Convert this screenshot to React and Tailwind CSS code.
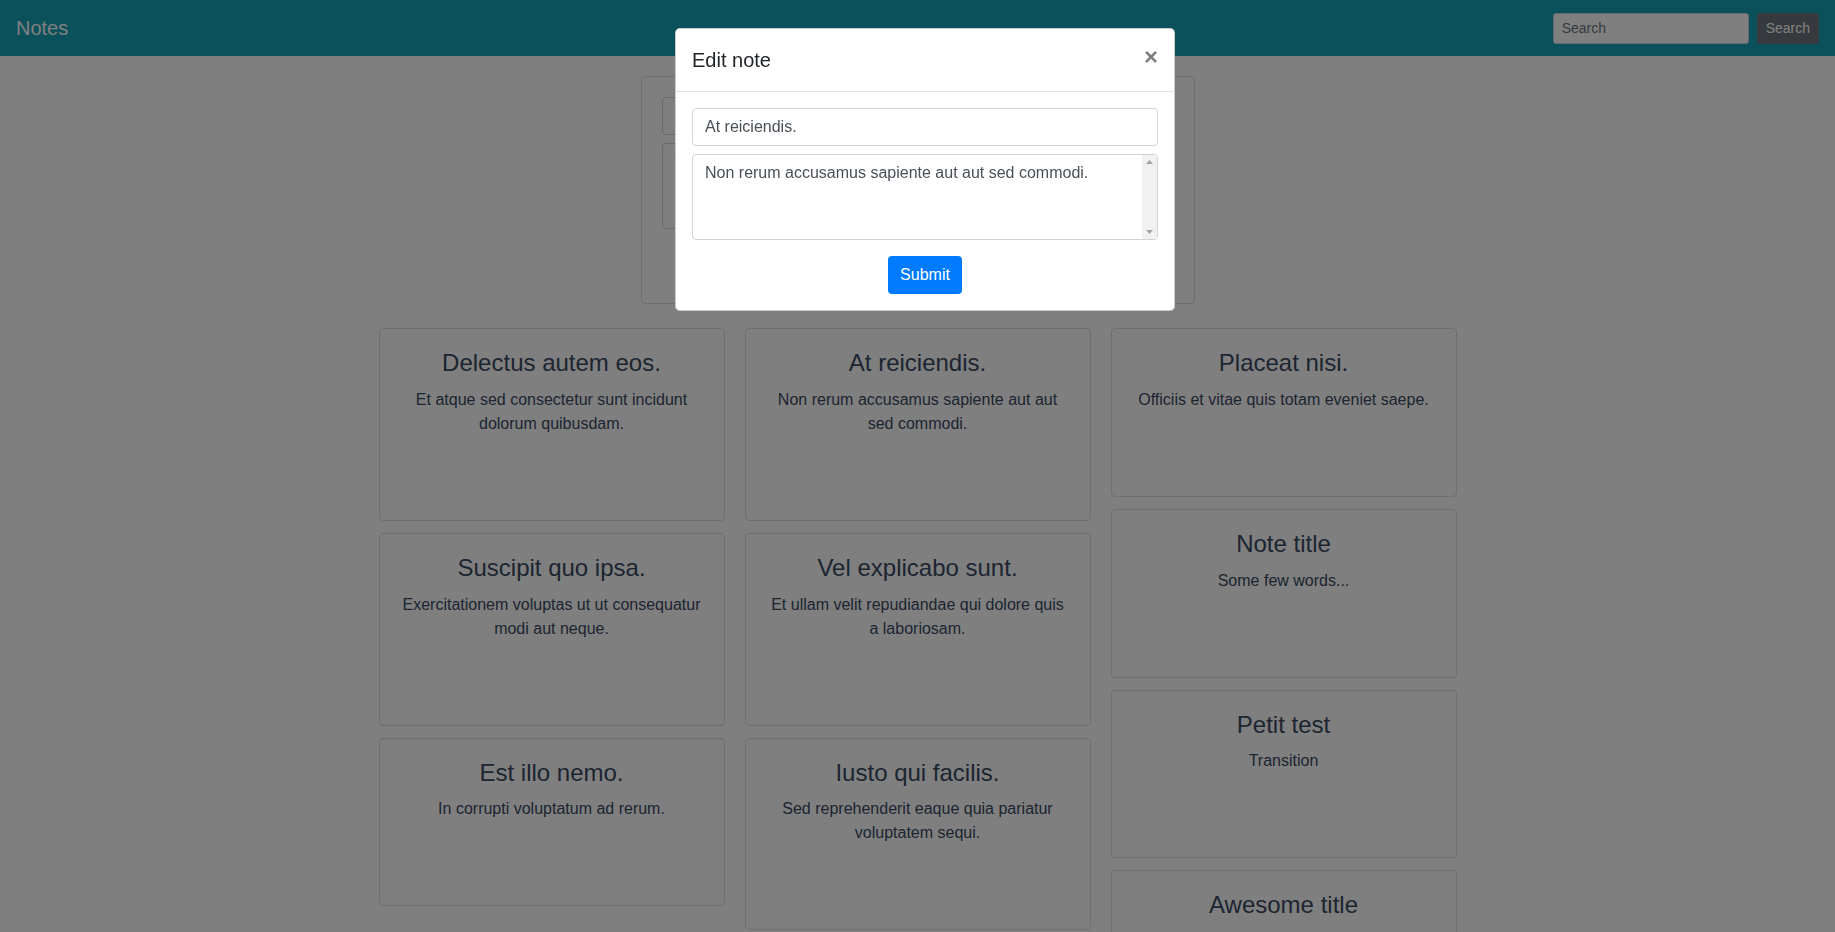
import React from 'react';

const columns = [
  [
    { title: 'Delectus autem eos.', text: 'Et atque sed consectetur sunt incidunt dolorum quibusdam.' },
    { title: 'Suscipit quo ipsa.', text: 'Exercitationem voluptas ut ut consequatur modi aut neque.' },
    { title: 'Est illo nemo.', text: 'In corrupti voluptatum ad rerum.' },
  ],
  [
    { title: 'At reiciendis.', text: 'Non rerum accusamus sapiente aut aut sed commodi.' },
    { title: 'Vel explicabo sunt.', text: 'Et ullam velit repudiandae qui dolore quis a laboriosam.' },
    { title: 'Iusto qui facilis.', text: 'Sed reprehenderit eaque quia pariatur voluptatem sequi.' },
  ],
  [
    { title: 'Placeat nisi.', text: 'Officiis et vitae quis totam eveniet saepe.' },
    { title: 'Note title', text: 'Some few words...' },
    { title: 'Petit test', text: 'Transition' },
    { title: 'Awesome title', text: 'Lorem ipsum dolor sit amet.' },
  ],
];

const NoteCard = ({ title, text }) => (
  <div className="border border-[#dfdfdf] rounded-[4px] bg-white p-5 text-center text-[#3a4a62]">
    <h4 className="text-[24px] leading-[1.2] font-normal mb-[10px]">{title}</h4>
    <p className="text-[16px] leading-6">{text}</p>
    <div className="h-[64px]" />
  </div>
);

const App = () => {
  return (
    <div className="h-screen overflow-hidden bg-white font-['Liberation_Sans',Arial,sans-serif] text-[#212529] relative">
      {/* Navbar */}
      <nav className="h-14 bg-[#17a2b8] flex items-center justify-between px-4">
        <span className="text-white text-[20px] leading-[30px]">Notes</span>
        <div className="flex items-center gap-2">
          <input
            className="w-[196px] h-[31px] px-2 text-[14px] bg-white border border-[#ced4da] rounded-[3px] placeholder:text-[#6c757d] outline-none"
            placeholder="Search"
          />
          <button className="h-[31px] px-2 text-[14px] text-white bg-[#6c757d] border border-[#6c757d] rounded-[3px]">
            Search
          </button>
        </div>
      </nav>

      {/* New note form */}
      <div className="w-[554px] mx-auto mt-5 border border-[#dfdfdf] rounded-[4px] p-5">
        <input
          className="w-full h-[38px] px-3 text-[16px] border border-[#ced4da] rounded-[4px] placeholder:text-[#6c757d]"
          placeholder="Title"
        />
        <textarea
          rows={3}
          className="block w-full h-[86px] mt-2 px-3 py-1.5 text-[16px] leading-6 border border-[#ced4da] rounded-[4px] resize-none placeholder:text-[#6c757d]"
          placeholder="Take a note..."
        />
        <div className="flex justify-center mt-4">
          <button className="h-[38px] px-3 text-[16px] text-white bg-[#007bff] rounded-[4px]">Submit</button>
        </div>
      </div>

      {/* Notes */}
      <div className="w-[1078px] mx-auto mt-6 grid grid-cols-3 gap-x-5 items-start">
        {columns.map((col, i) => (
          <div key={i} className="flex flex-col gap-3">
            {col.map((n) => (
              <NoteCard key={n.title} {...n} />
            ))}
          </div>
        ))}
      </div>

      {/* Backdrop */}
      <div className="fixed inset-0 bg-[rgba(0,0,0,0.5)]" />

      {/* Modal */}
      <div className="fixed inset-0 pl-[15px]">
        <div className="w-[500px] mx-auto mt-[28px] bg-white border border-[rgba(0,0,0,0.2)] rounded-[5px]">
          <div className="flex items-start p-4 border-b border-[#dee2e6]">
            <h5 className="text-[20px] leading-[30px] text-[#212529]">Edit note</h5>
            <button className="ml-auto -m-4 p-4 text-[24px] leading-none font-bold text-black opacity-50">×</button>
          </div>
          <div className="p-4">
            <input
              className="w-full h-[38px] px-3 text-[16px] text-[#495057] border border-[#ced4da] rounded-[4px] outline-none"
              defaultValue="At reiciendis."
            />
            <div className="relative mt-2">
              <textarea
                rows={3}
                className="block w-full h-[86px] px-3 py-1.5 text-[16px] leading-6 text-[#495057] border border-[#ced4da] rounded-[4px] resize-none overflow-hidden outline-none"
                defaultValue="Non rerum accusamus sapiente aut aut sed commodi."
              />
              {/* scrollbar */}
              <div className="absolute top-px bottom-px right-px w-[15px] bg-[#f1f1f1] rounded-r-[3px] flex flex-col items-center justify-between py-[5px]">
                <svg width="7" height="4" viewBox="0 0 7 4">
                  <path d="M0 4 L3.5 0 L7 4 Z" fill="#a3a3a3" />
                </svg>
                <svg width="7" height="4" viewBox="0 0 7 4">
                  <path d="M0 0 L3.5 4 L7 0 Z" fill="#a3a3a3" />
                </svg>
              </div>
            </div>
            <div className="flex justify-center mt-4">
              <button className="h-[38px] px-3 text-[16px] text-white bg-[#007bff] rounded-[4px]">Submit</button>
            </div>
          </div>
        </div>
      </div>
    </div>
  );
};

export default App;
